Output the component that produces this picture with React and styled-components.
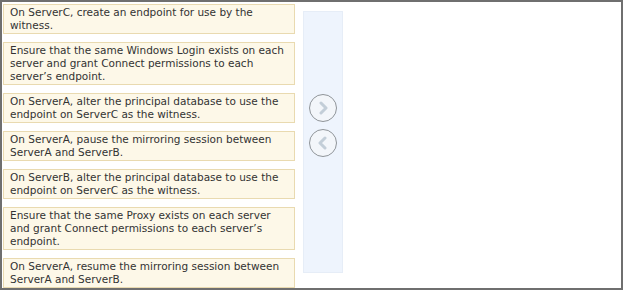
import React from "react";
import styled, { createGlobalStyle } from "styled-components";

const GlobalStyle = createGlobalStyle`
  html, body {
    margin: 0;
    padding: 0;
    background: #ffffff;
  }
`;

const steps = [
  "On ServerC, create an endpoint for use by the witness.",
  "Ensure that the same Windows Login exists on each server and grant Connect permissions to each server\u2019s endpoint.",
  "On ServerA, alter the principal database to use the endpoint on ServerC as the witness.",
  "On ServerA, pause the mirroring session between ServerA and ServerB.",
  "On ServerB, alter the principal database to use the endpoint on ServerC as the witness.",
  "Ensure that the same Proxy exists on each server and grant Connect permissions to each server\u2019s endpoint.",
  "On ServerA, resume the mirroring session between ServerA and ServerB.",
];

const Chevron = ({ dir }) => (
  <svg width="14" height="14" viewBox="0 0 14 14">
    <path
      d={dir === "right" ? "M5 2 L10 7 L5 12" : "M9 2 L4 7 L9 12"}
      fill="none"
      stroke="#c3ced8"
      strokeWidth="3"
      strokeLinecap="round"
      strokeLinejoin="round"
    />
  </svg>
);

const App = () => {
  return (
    <>
      <GlobalStyle />
      <Frame>
        <List>
          {steps.map((text) => (
            <Card key={text}>{text}</Card>
          ))}
        </List>
        <Mover>
          <RoundButton>
            <Chevron dir="right" />
          </RoundButton>
          <RoundButton>
            <Chevron dir="left" />
          </RoundButton>
        </Mover>
      </Frame>
    </>
  );
};

const Frame = styled.div`
  box-sizing: border-box;
  width: 623px;
  height: 290px;
  border: 2px solid #6f6f6f;
  display: flex;
  align-items: flex-start;
  padding: 2px 0 0 1px;
  font-family: "DejaVu Sans", Verdana, sans-serif;
  background: #fff;
`;

const List = styled.div`
  width: 292px;
  display: flex;
  flex-direction: column;
  gap: 8px;
`;

const Card = styled.div`
  box-sizing: border-box;
  background: #fdf8e8;
  border: 1px solid #e9dab0;
  padding: 1px 2px 1px 6px;
  font-size: 10.5px;
  line-height: 13px;
  color: #333333;
`;

const Mover = styled.div`
  box-sizing: border-box;
  width: 40px;
  height: 262px;
  margin: 7px 0 0 8px;
  background: #eef4fd;
  border: 1px solid #e6edf7;
  display: flex;
  flex-direction: column;
  align-items: center;
  padding-top: 82px;
  gap: 7px;
`;

const RoundButton = styled.div`
  box-sizing: border-box;
  width: 28px;
  height: 28px;
  border-radius: 50%;
  border: 1.5px solid #8f9499;
  background: #f3f6fa;
  display: flex;
  align-items: center;
  justify-content: center;
`;

export default App;
